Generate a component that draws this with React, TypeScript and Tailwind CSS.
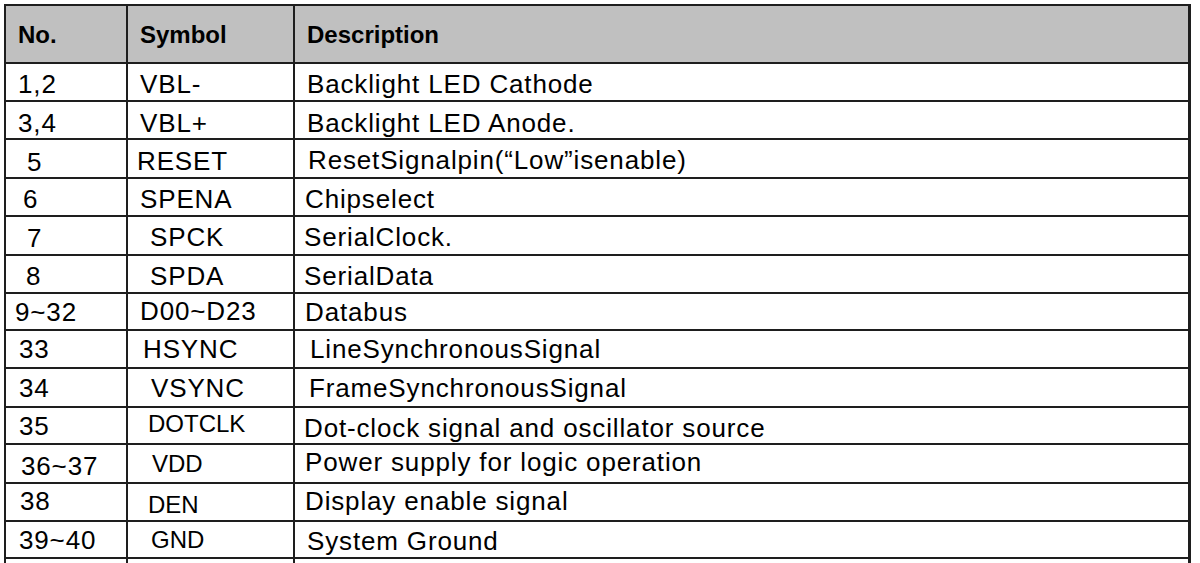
import React from "react";

type Cell = { t: string; c: string };
type Row = [Cell, Cell, Cell];

const body = "text-[26px] tracking-[0.85px]";
const small = "text-[24px]";

const rows: Row[] = [
  [
    { t: "1,2", c: "pl-[12px] pt-[7px] " + body },
    { t: "VBL-", c: "pl-[12px] pt-[7px] " + body },
    { t: "Backlight LED Cathode", c: "pl-[12px] pt-[7px] " + body },
  ],
  [
    { t: "3,4", c: "pl-[12px] pt-[8px] " + body },
    { t: "VBL+", c: "pl-[12px] pt-[8px] " + body },
    { t: "Backlight LED Anode.", c: "pl-[12px] pt-[8px] " + body },
  ],
  [
    { t: "5", c: "pl-[21px] pt-[9px] " + body },
    { t: "RESET", c: "pl-[9px] pt-[8px] " + body },
    { t: "ResetSignalpin(\u201cLow\u201disenable)", c: "pl-[13px] pt-[7px] " + body },
  ],
  [
    { t: "6", c: "pl-[17px] pt-[7px] " + body },
    { t: "SPENA", c: "pl-[12px] pt-[7px] " + body },
    { t: "Chipselect", c: "pl-[10px] pt-[7px] " + body },
  ],
  [
    { t: "7", c: "pl-[21px] pt-[8px] " + body },
    { t: "SPCK", c: "pl-[22px] pt-[7px] " + body },
    { t: "SerialClock.", c: "pl-[9px] pt-[7px] " + body },
  ],
  [
    { t: "8", c: "pl-[20px] pt-[7px] " + body },
    { t: "SPDA", c: "pl-[22px] pt-[7px] " + body },
    { t: "SerialData", c: "pl-[9px] pt-[7px] " + body },
  ],
  [
    { t: "9~32", c: "pl-[9px] pt-[5px] " + body },
    { t: "D00~D23", c: "pl-[12px] pt-[4px] " + body },
    { t: "Databus", c: "pl-[10px] pt-[5px] " + body },
  ],
  [
    { t: "33", c: "pl-[13px] pt-[5px] " + body },
    { t: "HSYNC", c: "pl-[15px] pt-[5px] " + body },
    { t: "LineSynchronousSignal", c: "pl-[15px] pt-[5px] " + body },
  ],
  [
    { t: "34", c: "pl-[13px] pt-[6px] " + body },
    { t: "VSYNC", c: "pl-[23px] pt-[6px] " + body },
    { t: "FrameSynchronousSignal", c: "pl-[14px] pt-[6px] " + body },
  ],
  [
    { t: "35", c: "pl-[13px] pt-[5px] " + body },
    { t: "DOTCLK", c: "pl-[20px] pt-[4px] " + small },
    { t: "Dot-clock signal and oscillator source", c: "pl-[9px] pt-[7px] " + body },
  ],
  [
    { t: "36~37", c: "pl-[15px] pt-[8px] " + body },
    { t: "VDD", c: "pl-[24px] pt-[7px] " + small },
    { t: "Power supply for logic operation", c: "pl-[10px] pt-[4px] " + body },
  ],
  [
    { t: "38", c: "pl-[14px] pt-[4px] " + body },
    { t: "DEN", c: "pl-[20px] pt-[9px] " + small },
    { t: "Display enable signal", c: "pl-[10px] pt-[4px] " + body },
  ],
  [
    { t: "39~40", c: "pl-[13px] pt-[5px] " + body },
    { t: "GND", c: "pl-[23px] pt-[6px] " + small },
    { t: "System Ground", c: "pl-[12px] pt-[6px] " + body },
  ],
];

export default function App() {
  return (
    <div
      className="w-[1200px] h-[563px] overflow-hidden bg-white text-black"
      style={{ fontFamily: '"Liberation Sans", Arial, sans-serif' }}
    >
      <div className="ml-[4px] mt-[4px] inline-grid grid-cols-[120px_165px_893px] grid-rows-[56px_36px_36px_37px_36px_37px_36px_35px_36px_37px_35px_37px_36px_35px_20px] gap-[2px] bg-[#1e1e1e] border-l-2 border-t-2 border-r-[3px] border-[#1e1e1e]">
        <div className="bg-[#c0c0c0] pl-[12px] pt-[17px] text-[24px] font-bold leading-none">No.</div>
        <div className="bg-[#c0c0c0] pl-[12px] pt-[17px] text-[24px] font-bold leading-none">Symbol</div>
        <div className="bg-[#c0c0c0] pl-[12px] pt-[17px] text-[24px] font-bold leading-none">Description</div>
        {rows.map((r, i) => (
          <React.Fragment key={i}>
            {r.map((cell, j) => (
              <div key={j} className={"bg-white leading-none whitespace-nowrap " + cell.c}>
                {cell.t}
              </div>
            ))}
          </React.Fragment>
        ))}
        <div className="bg-white" />
        <div className="bg-white" />
        <div className="bg-white" />
      </div>
    </div>
  );
}
